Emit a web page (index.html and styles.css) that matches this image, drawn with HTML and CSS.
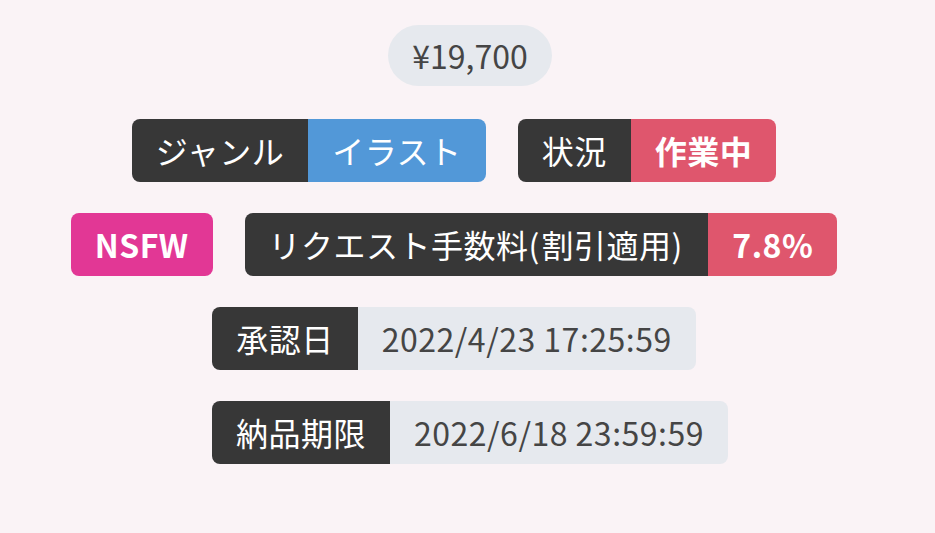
FILE: index.html
```html
<!DOCTYPE html>
<html lang="ja">
<head>
<meta charset="utf-8">
<link rel="stylesheet" href="styles.css">
</head>
<body>
<div class="wrap">
  <div class="row row-price"><span class="price">¥19,700</span></div>
  <div class="row spaced">
    <span class="tag"><span class="k">ジャンル</span><span class="v blue">イラスト</span></span>
    <span class="tag"><span class="k">状況</span><span class="v red b">作業中</span></span>
  </div>
  <div class="row spaced">
    <span class="tag"><span class="v pink b solo">NSFW</span></span>
    <span class="tag"><span class="k">リクエスト手数料<span class="paren">(</span>割引適用<span class="paren">)</span></span><span class="v red b">7.8%</span></span>
  </div>
  <div class="row spaced">
    <span class="tag"><span class="k">承認日</span><span class="v light">2022/4/23 17:25:59</span></span>
  </div>
  <div class="row">
    <span class="tag"><span class="k">納品期限</span><span class="v light">2022/6/18 23:59:59</span></span>
  </div>
</div>
</body>
</html>
```
FILE: styles.css
```css
html, body {
  margin: 0;
  padding: 0;
  background: #faf3f6;
}
body {
  font-family: "Noto Sans CJK JP", "Noto Sans", sans-serif;
  width: 935px;
  height: 533px;
  overflow: hidden;
}
.wrap {
  display: flex;
  flex-direction: column;
  align-items: center;
  padding: 25px 0 0 5px;
  gap: 31px;
}
.row {
  display: flex;
  justify-content: center;
}
.row-price {
  margin-bottom: 2px;
}
.price {
  display: block;
  background: #e6e9ee;
  color: #454545;
  font-size: 32px;
  line-height: 45px;
  padding: 8px 24px;
  border-radius: 31px;
}
.spaced .tag {
  margin-right: 32px;
}
.tag {
  display: flex;
  border-radius: 8px;
  overflow: hidden;
  font-size: 32px;
  line-height: 47px;
  letter-spacing: 0.5px;
}
.k, .v {
  display: block;
  padding: 8px 24px;
  white-space: nowrap;
}
.paren {
  letter-spacing: 2px;
}
.k {
  background: #373737;
  color: #fff;
}
.v {
  color: #fff;
}
.b {
  font-weight: 700;
}
.blue {
  background: #5298d8;
}
.red {
  background: #df566d;
}
.pink {
  background: #e23795;
}
.light {
  background: #e6e9ee;
  color: #454545;
}
```
